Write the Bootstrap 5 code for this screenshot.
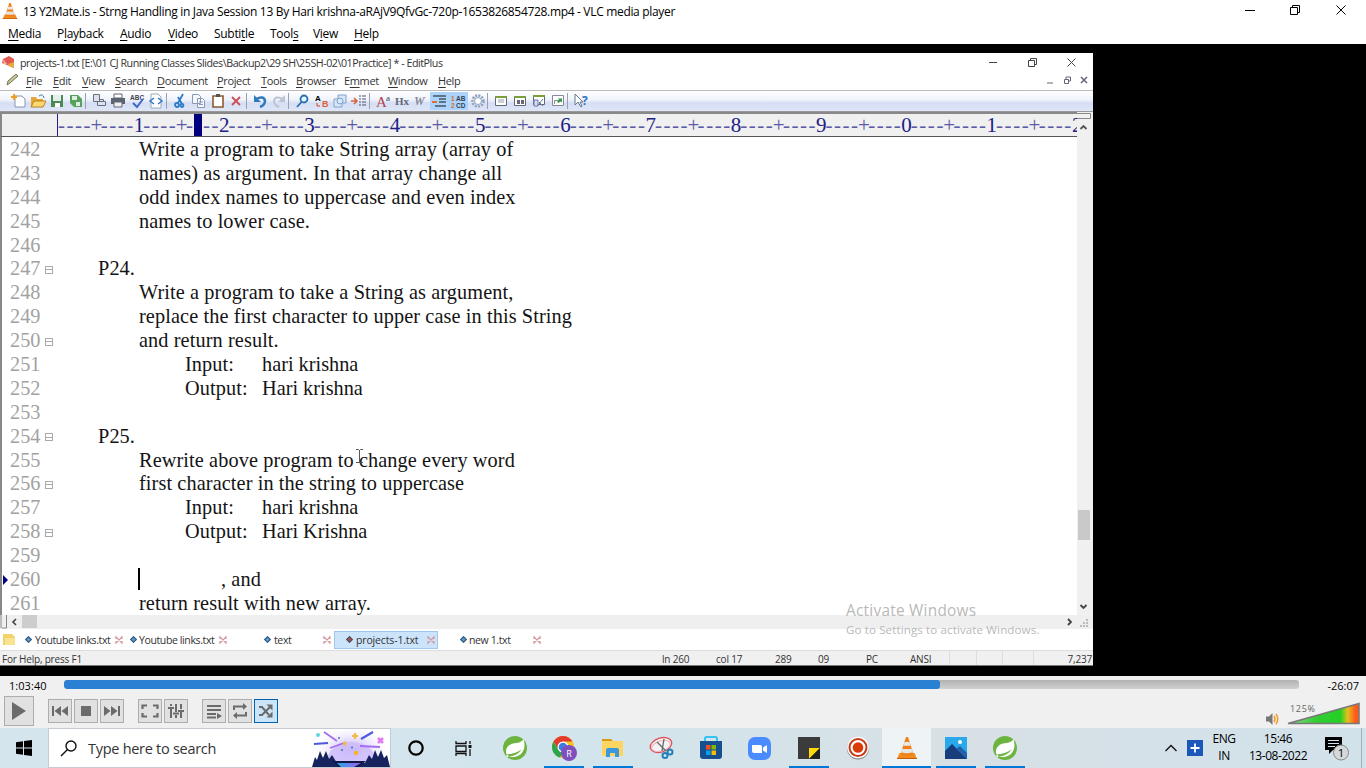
<!DOCTYPE html>
<html lang="en">
<head>
<meta charset="utf-8">
<meta name="viewport" content="width=device-width, initial-scale=1">
<title>VLC media player</title>
<link href="https://cdn.jsdelivr.net/npm/bootstrap@5.3.0/dist/css/bootstrap.min.css" rel="stylesheet">
<style>
body{width:1366px;height:768px;overflow:hidden;background:#000;color:#000;font-family:"Open Sans","Noto Sans",sans-serif;font-size:12px;line-height:1}
svg{display:block;flex:none}
u{text-underline-offset:2px;text-decoration-thickness:1px}
.ui-line{white-space:nowrap;line-height:normal}
.vlc-title{height:22px;padding-left:2px}
.vlc-title .cap{margin-left:5px;letter-spacing:-.32px}
.vlc-menu{height:22px;letter-spacing:-.3px}
.vlc-menu span{width:0;overflow:visible;flex:none}
.stage{height:632px;padding-top:9px}
.editor{width:1093px;height:613px;overflow:hidden;color:#333}
.ep-title{height:19px;font-size:10.7px;letter-spacing:-.46px}
.ep-menu{height:18px;font-size:11px;letter-spacing:-.35px;padding-bottom:2px}
.ep-tools{height:22px;padding-left:9.5px;background:linear-gradient(#fff,#eef2fb 45%,#d5def4 60%,#dfe6f7);border-top:1px solid #bbb;border-bottom:1px solid #999}
.tcell{width:18.93px;height:18px;flex:none;display:flex;align-items:center;justify-content:center}
.tsep{width:4.7px;height:16px;flex:none;border-left:1px solid #9aa0ad}
.hot{background:#abd3fb}
.ruler{height:25px;background:#f0f0f0;border-top:2px solid #888;border-bottom:1px solid #555;border-left:2px solid #888;color:#202088;font:21px/22px "Liberation Serif",serif;width:1077px;overflow:hidden}
.ruler .rstart{width:56px;height:22px;border-right:1px solid #202088;flex:none}
.ruler .dash{width:34.14px;letter-spacing:1.53px;flex:none;white-space:nowrap;color:#5a5aa8}
.ruler .tick{width:8.53px;flex:none;display:flex;justify-content:center}
.ruler .tick.plus{font-size:21px;color:#5a5aa8}
.code-area{height:478px;border-left:2px solid #888;background:#fff}
.code-lines{width:1075px;padding-top:1px;font:20.3px/23.9px "Liberation Serif",serif;color:#141414}
.code-row{height:23.9px;white-space:pre}
.code-row .src{letter-spacing:.1px}
.num{width:31px;margin-left:8px;color:#a2a2a2;flex:none}
.fold{width:8px;height:8px;border:1px solid #aaa;margin:1px 1px 0 4px;flex:none;background:linear-gradient(#aaa,#aaa) center/6px 1px no-repeat}
.vbar{width:16px;background:#f0f0f0}
.vthumb{width:12px;height:30px;background:#c9c9c9;margin:373px auto 0 1px}
.hbar{height:14px;background:#f0eff0}
.ep-tabs{height:22px;background:#fff;font-size:10.5px;letter-spacing:-.38px;border-bottom:1px solid #ddd}
.dia{width:5px;height:5px;background:#5b9ad0;transform:rotate(45deg);flex:none;border:1px solid #357}
.kx{width:8px;height:8px;flex:none}
.ep-status{height:15px;background:#f1f0f0;font-size:10px;letter-spacing:-.2px;border-bottom:1px solid #777}
.st{flex:none;height:14px;line-height:17px;white-space:nowrap}
.ctl{height:52px;background:#f0f0f0}
.seek{height:9px;width:1235px;border-radius:3px;background:linear-gradient(#b2b2b2,#d0d0d0);overflow:hidden;margin-top:-1px}
.seek>div{height:9px;border-radius:3px;background:#2a80d2}
.vbtn{width:24px;height:24px;border:1px solid #adadad;background:#e1e1e1;display:flex;align-items:center;justify-content:center;flex:none;color:#6b6b6b}
.vbtn.big{width:30px;height:30px}
.vbtn.on{background:#cce4f7;border-color:#0063b1}
.task{height:40px;background:linear-gradient(90deg,#d5e5ee,#d3e5ec 45%,#d7e0e5 70%,#d2e2eb)}
.finder{width:343px;height:40px;background:#fff;border:1px solid #c5cbd0;font-size:14.5px;color:#333}
.app{width:49px;height:40px;flex:none;display:flex;align-items:center;justify-content:center}
.run{box-shadow:inset 0 -2px #0078d7}
.run.front{background:#eef3f6}
.run:not(.front){width:40px;margin:0 4.5px}
.tray{font-size:12px;letter-spacing:-.45px;text-align:center;line-height:17px;flex:none;white-space:nowrap}
.wmark{position:absolute;left:846px;top:601px;color:#b9b9b9;font-size:15.4px;letter-spacing:.25px;line-height:20px;white-space:nowrap}
.wmark div+div{font-size:11.6px;letter-spacing:.1px;line-height:18px}
</style>
</head>
<body>
<svg width="0" height="0" class="position-absolute">
 <defs>
  <symbol id="cone" viewBox="0 0 20 22"><path d="M9 0h2l5.500 17h-13z" fill="#f0811a"/><path d="M7.500 5h5l1.200 3.800H6.300zM5.200 12h9.600l1.200 4H4z" fill="#e9e9e6"/><path d="M2.500 16h15L20 22H0z" fill="#f58a1c"/><path d="M4 17c2 2 10 2 12 0l-1-3H5z" fill="#ef7f18"/><path d="M5.200 12h9.600l1 3.300q-6 2-11.600 0z" fill="#e4e4e2"/><path d="M0 21h20v1H0z" fill="#c45b0c"/></symbol>
  <symbol id="leaf" viewBox="0 0 24 24"><circle cx="12" cy="12" r="12" fill="#6db33f"/><path d="M20.500 3c1 4 1.800 8-.2 11.500-2.300 5.500-8 7.500-15.300 6 6-.3 10-2 13.500-7C14.500 16.500 9 18 3.500 18.500c-1.500-4 0-8.500 5-10.500C12.500 6.500 18 7.500 20.500 3z" fill="#fff"/><circle cx="4.300" cy="20" r="1" fill="#fff"/></symbol>
  <symbol id="kx" viewBox="0 0 8 8"><path d="M1 1l6 6M7 1L1 7M1 0v3M7 0v3M1 5v3M7 5v3" stroke="#d39aa2" stroke-width="1.200"/></symbol>
 </defs>
</svg>

<!-- VLC window -->
<header class="bg-white">
 <div class="vlc-title d-flex align-items-center ui-line">
  <svg width="16" height="16"><use href="#cone"/></svg>
  <span class="cap">13 Y2Mate.is - Strng Handling in Java Session 13 By Hari krishna-aRAjV9QfvGc-720p-1653826854728.mp4 - VLC media player</span>
  <svg class="ms-auto" style="margin:-2px 17px 0 0" width="104" height="12" fill="none" stroke="#000"><path d="M0 6.500h10M45.500 3.500h7v7h-7zM47.500 3.500v-2h7v7h-2M91.500 1.500l9 9M100.500 1.500l-9 9"/></svg>
 </div>
 <nav class="vlc-menu d-flex align-items-center ui-line">
  <span style="margin-left:8px"><u>M</u>edia</span><span style="margin-left:49px">P<u>l</u>ayback</span><span style="margin-left:63px"><u>A</u>udio</span><span style="margin-left:48px"><u>V</u>ideo</span><span style="margin-left:46px">Subti<u>t</u>le</span><span style="margin-left:56px">Tool<u>s</u></span><span style="margin-left:43px">V<u>i</u>ew</span><span style="margin-left:41px"><u>H</u>elp</span>
 </nav>
</header>

<main class="stage bg-black">
 <section class="editor bg-white">
  <div class="ep-title d-flex align-items-center ui-line">
   <svg width="13" height="15" style="margin-left:2px"><path d="M1 4l6-3 5 3v9l-7-3-5-2z" fill="#e05a50"/><path d="M6 9l6-2v6l-5-2z" fill="#e8a840"/><path d="M1 4l4 5-3 0z" fill="#f6b0a8"/></svg>
   <span style="margin-left:5px">projects-1.txt [E:\01 CJ Running Classes Slides\Backup2\29 SH\25SH-02\01Practice] * - EditPlus</span>
   <svg class="ms-auto" style="margin:-2px 16px 0 0" width="88" height="12" fill="none" stroke="#444"><path d="M0 6.500h8M39.500 4.500h6v6h-6zM41.500 4.500v-2h6v6h-2M78.500 2.500l8 8M86.500 2.500l-8 8"/></svg>
  </div>
  <nav class="ep-menu vlc-menu d-flex align-items-center ui-line" style="height:18px">
   <svg width="14" height="14" style="margin-left:5px"><path d="M2 12l1-4 8-7 2 2-8 7z" fill="#c6c79a" stroke="#77744f"/></svg>
   <span style="margin-left:7px"><u>F</u>ile</span><span style="margin-left:27px"><u>E</u>dit</span><span style="margin-left:29px"><u>V</u>iew</span><span style="margin-left:33px"><u>S</u>earch</span><span style="margin-left:42px"><u>D</u>ocument</span><span style="margin-left:60px"><u>P</u>roject</span><span style="margin-left:44px"><u>T</u>ools</span><span style="margin-left:35px"><u>B</u>rowser</span><span style="margin-left:48px">E<u>m</u>met</span><span style="margin-left:44px"><u>W</u>indow</span><span style="margin-left:50px"><u>H</u>elp</span>
   <svg class="ms-auto me-1" width="42" height="10" fill="none" stroke="#667"><path d="M0 8h6M17.500 4.500h4v4h-4zM19 4v-2h4.500v4h-2"/><path d="M34 2l6 6M40 2l-6 6" stroke-width="1.500"/></svg>
  </nav>
  <div class="ep-tools d-flex align-items-center">
   <div class="tcell"><svg width="16" height="16"><path d="M4 3h7l3 3v8H4z" fill="#fff" stroke="#8795b5"/><path d="M3 1v6M0 4h6" stroke="#f0a020" stroke-width="2"/></svg></div>
   <div class="tcell"><svg width="16" height="16"><path d="M1 4h5l1 2h6v7H1z" fill="#e5a838"/><path d="M4 8h12l-3 6H1z" fill="#ffd870" stroke="#b78020"/><path d="M9 3q4-3 5 2" stroke="#389" fill="none"/></svg></div>
   <div class="tcell"><svg width="14" height="14"><path d="M1 1h12v12H1z" fill="#4b8a55"/><path d="M3 1h8v6H3z" fill="#e5eee8"/><path d="M5 9h5v4H5z" fill="#fff"/></svg></div>
   <div class="tcell"><svg width="14" height="14"><path d="M1 1h8l4 4v8H5L1 9z" fill="#58a05e"/><path d="M3 2h5v4H3zM7 8h4v4H7z" fill="#dceedd"/></svg></div><i class="tsep"></i>
   <div class="tcell"><svg width="16" height="16" fill="#dde3ee" stroke="#687080"><path d="M2.500 1.500h6v7h-6zM6.500 8.500h8v4h-8zM8.500 6.500h4v2h-4z"/></svg></div>
   <div class="tcell"><svg width="16" height="16"><path d="M4 1h8v4H4z" fill="#fff" stroke="#667"/><path d="M1 5h14v6H1z" fill="#5d6470"/><path d="M4 9h8v5H4z" fill="#eee" stroke="#667"/></svg></div>
   <div class="tcell"><svg width="16" height="16"><text x="1" y="7" font-size="6.500" font-family="Liberation Sans" font-weight="700" fill="#445">ABC</text><path d="M4 10l4 4 6-8" fill="none" stroke="#4166c8" stroke-width="2"/></svg></div>
   <div class="tcell"><svg width="16" height="16"><path d="M3 1h7l3 3v11H3z" fill="#fff" stroke="#9ab"/><path d="M6 5L2 8l4 3M10 5l4 3-4 3" fill="none" stroke="#3778c8" stroke-width="1.500"/></svg></div><i class="tsep"></i>
   <div class="tcell"><svg width="14" height="16" fill="none" stroke="#2e7bc8" stroke-width="1.800"><path d="M10 1L5 10M5 4l4 7"/><circle cx="4" cy="12" r="2"/><circle cx="9" cy="12.500" r="1.500"/></svg></div>
   <div class="tcell"><svg width="15" height="16" fill="#f5f8fd" stroke="#8a9ab5"><path d="M1.500 1.500h6l2 2v7h-8zM6.500 5.500h5l2 2v7h-7zM8 9h4M8 11.500h4"/></svg></div>
   <div class="tcell"><svg width="12" height="14"><path d="M1 2h10v11H1z" fill="#fff" stroke="#8a5b30" stroke-width="1.600"/><path d="M4 0h4v3H4z" fill="#555"/></svg></div>
   <div class="tcell"><svg width="12" height="12"><path d="M2 2l8 8M10 2l-8 8" stroke="#cc4f58" stroke-width="1.800"/></svg></div><i class="tsep"></i>
   <div class="tcell"><svg width="14" height="14"><path d="M3 5q8-4 9 2 0 4-5 6" fill="none" stroke="#2f79bd" stroke-width="2.500"/><path d="M1 1v7h7z" fill="#2f79bd"/></svg></div>
   <div class="tcell"><svg width="14" height="14"><path d="M11 5q-8-4-9 2 0 4 5 6" fill="none" stroke="#bcc4d2" stroke-width="2"/><path d="M13 1v7H6z" fill="#bcc4d2"/></svg></div><i class="tsep"></i>
   <div class="tcell"><svg width="14" height="14" fill="none" stroke="#2d6cb0" stroke-width="1.800"><circle cx="8" cy="5" r="3.500" fill="#dff"/><path d="M5.500 8L1 13"/></svg></div>
   <div class="tcell"><svg width="16" height="16" font-family="Liberation Sans" font-weight="700"><text x="1" y="8" font-size="8">A</text><path d="M3 10v3h3" stroke="#d84020" fill="none"/><text x="8" y="14" font-size="9" fill="#e0603c">B</text></svg></div>
   <div class="tcell"><svg width="14" height="14" fill="#d9e6f6" stroke="#7fa3cf"><path d="M5 1h8v8H5zM1 5h8v8H1z"/><circle cx="7" cy="7" r="3"/></svg></div>
   <div class="tcell"><svg width="16" height="14"><path d="M0 7h5M3 4l3 3-3 3" stroke="#d8603c" stroke-width="1.500" fill="none"/><path d="M8 2h2M8 5h2M8 8h2M8 11h2M11 2h4M11 5h4M11 8h4M11 11h4" stroke="#556"/></svg></div><i class="tsep"></i>
   <div class="tcell"><svg width="16" height="16"><text x="1" y="14" font-family="Liberation Serif" font-size="15" fill="#b5404c">A</text><text x="11" y="8" font-family="Liberation Serif" font-size="9" fill="#345">a</text></svg></div>
   <div class="tcell"><svg width="16" height="16"><text x="1" y="12" font-family="Liberation Serif" font-size="11" font-weight="700" fill="#667">Hx</text></svg></div>
   <div class="tcell"><svg width="14" height="16"><text x="0" y="12" font-family="Liberation Serif" font-size="12" font-style="italic" font-weight="700" fill="#889">W</text></svg></div>
   <div class="tcell hot"><svg width="15" height="14"><path d="M1 2h13M7 5h7M7 8h7M3 12h11" stroke="#456" stroke-width="1.500"/><path d="M0 8h5" stroke="#e07030" stroke-width="2"/></svg></div>
   <div class="tcell hot"><svg width="17" height="17" font-family="Liberation Sans" font-size="6.500" font-weight="700"><text x="1" y="7.500" fill="#d0702f">1</text><text x="6" y="7.500" fill="#345">AB</text><text x="1" y="15" fill="#d0702f">2</text><text x="6" y="15" fill="#345">CD</text></svg></div>
   <div class="tcell"><svg width="16" height="16"><circle cx="8" cy="8" r="5.500" fill="#e4ebf5" stroke="#8ea3bd" stroke-width="2.500" stroke-dasharray="2 1.200"/><circle cx="8" cy="8" r="3.500" fill="#fff" stroke="#8ea3bd"/></svg></div><i class="tsep"></i>
   <div class="tcell"><svg width="14" height="14"><path d="M1.500 2.500h11v9h-11z" fill="#fff" stroke="#667"/><path d="M1 2h12v2H1z" fill="#7b9e3c"/><path d="M4 6h6M4 8h6" stroke="#99a"/></svg></div>
   <div class="tcell"><svg width="14" height="14"><path d="M1.500 2.500h11v9h-11z" fill="#fff" stroke="#667"/><path d="M1 2h12v2H1z" fill="#7b9e3c"/><path d="M4 6h3v4H4zM8 6h3v4H8z" fill="#667"/></svg></div>
   <div class="tcell"><svg width="14" height="14"><path d="M1.500 1.500h11v9h-11z" fill="#fff" stroke="#667"/><path d="M1 1h12v2H1z" fill="#7b9e3c"/><path d="M2 6h4v6H2zM7 8l4 4M11 5l-4 5" fill="#dde" stroke="#67a"/></svg></div>
   <div class="tcell"><svg width="14" height="14"><path d="M1.500 1.500h11v10h-11z" fill="#fff" stroke="#889"/><path d="M3.500 10V6.500H8" fill="none" stroke="#889"/><path d="M6 8l2-2-1-1.500h4v4L9.500 7.500 7.500 9z" fill="#3a9a48"/></svg></div><i class="tsep"></i>
   <div class="tcell"><svg width="16" height="16"><path d="M1 1v11l3-3 3 5 1-1-2-4h3z" fill="#fff" stroke="#678"/><text x="8" y="12" font-size="12" font-weight="700" fill="#2f72c0">?</text></svg></div>
  </div>
  <div class="d-flex">
   <div class="ruler d-flex position-relative" id="ruler"><div class="rstart"></div></div>
   <div class="flex-fill" style="background:#f0f0f0"><svg width="16" height="25" fill="none" stroke="#555"><path d="M0 6.500h13.500v-5H0" stroke="#888"/><path d="M3.500 17L6.500 14l3 3" stroke-width="1.800"/></svg></div>
  </div>
  <div class="code-area d-flex">
   <div class="code-lines" id="code"></div>
   <div class="vbar"><div class="vthumb"></div><svg width="16" height="10" style="margin-top:62px" fill="none" stroke="#444" stroke-width="1.800"><path d="M3.500 3L6.500 6l3-3"/></svg></div>
  </div>
  <div class="hbar d-flex align-items-center">
   <svg width="40" height="14"><path d="M1 0v13M6.500 0v13H2" stroke="#888" fill="none"/><path d="M16 4l-3 3 3 3" fill="none" stroke="#444" stroke-width="1.600"/><path d="M22 0h15v13H22z" fill="#cdcdcd"/></svg>
   <svg class="ms-auto" width="28" height="14"><path d="M3 4l3 3-3 3" fill="none" stroke="#444" stroke-width="1.800"/><path d="M21 4h2v2h-2zM21 7h2v2h-2zM18 7h2v2h-2zM21 10h2v2h-2zM18 10h2v2h-2zM15 10h2v2h-2z" fill="#bbb"/></svg>
  </div>
  <div class="ep-tabs d-flex align-items-center ui-line">
   <svg width="13" height="13" style="margin-left:3px"><path d="M0 1h9l3 3v8H0z" fill="#f1d36a"/><path d="M2 5h10v7H2z" fill="#f8e390"/></svg>
   <div class="d-flex align-items-center" style="width:105px;padding-left:10px"><i class="dia"></i><span style="margin-left:4px">Youtube links.txt</span><svg class="kx ms-auto" style="margin-right:-2px"><use href="#kx"/></svg></div>
   <div class="d-flex align-items-center" style="width:105px;padding-left:10px"><i class="dia"></i><span style="margin-left:3px">Youtube links.txt</span><svg class="kx ms-auto" style="margin-right:-1px"><use href="#kx"/></svg></div>
   <div class="d-flex align-items-center" style="width:108px;padding-left:39px"><i class="dia"></i><span class="ms-1">text</span><svg class="kx ms-auto" style="margin-right:3px"><use href="#kx"/></svg></div>
   <div class="d-flex align-items-center" style="width:104px;height:18px;background:#cce4fa;border:1px solid #9fc8ee;padding-left:12px"><i class="dia" style="background:#c04a30"></i><span class="ms-1" style="letter-spacing:-.15px">projects-1.txt</span><svg class="kx ms-auto" style="margin-right:2px"><use href="#kx"/></svg></div>
   <div class="d-flex align-items-center" style="width:103px;padding-left:23px"><i class="dia"></i><span style="margin-left:3px">new 1.txt</span><svg class="kx ms-auto"><use href="#kx"/></svg></div>
  </div>
  <div class="ep-status d-flex">
   <span class="st" style="width:662px;padding-left:2px">For Help, press F1</span><span class="st" style="width:54px">ln 260</span><span class="st" style="width:59px">col 17</span><span class="st" style="width:43px">289</span><span class="st" style="width:48px">09</span><span class="st" style="width:44px">PC</span><span class="st" style="width:40px;border-right:1px solid #ddd">ANSI</span><span class="st" style="width:27px;border-right:1px solid #ddd"></span><span class="st" style="width:26px;border-right:1px solid #ddd"></span><span class="st" style="width:31px;border-right:1px solid #ddd"></span><span class="st ms-auto me-0" style="padding-right:1px">7,237</span>
  </div>
 </section>
 <div class="wmark"><div>Activate Windows</div><div>Go to Settings to activate Windows.</div></div>
</main>

<!-- Player controls -->
<section class="ctl">
 <div class="d-flex align-items-center ui-line" style="height:18px;font-size:11px">
  <span style="width:64px;padding-left:9px;letter-spacing:.05px" class="flex-shrink-0">1:03:40</span>
  <div class="seek"><div style="width:876px"></div></div>
  <span class="ms-auto" style="padding-right:7px">-26:07</span>
 </div>
 <div class="d-flex align-items-center" style="height:34px;padding-left:4px">
  <div class="vbtn big"><svg width="14" height="18"><path d="M0 0l14 9-14 9z" fill="currentColor"/></svg></div>
  <div class="vbtn" style="margin-left:14px"><svg width="16" height="12" fill="currentColor"><path d="M0 1h2v10H0zM9 1v10L2.500 6zM16 1v10L9.500 6z"/></svg></div>
  <div class="vbtn" style="margin-left:2px"><svg width="10" height="10"><path d="M0 0h10v10H0z" fill="currentColor"/></svg></div>
  <div class="vbtn" style="margin-left:2px"><svg width="16" height="12" fill="currentColor"><path d="M14 1h2v10h-2zM0 1v10l6.500-5zM7 1v10l6.500-5z"/></svg></div>
  <div class="vbtn" style="margin-left:14px"><svg width="18" height="14" fill="none" stroke="currentColor" stroke-width="2.200"><path d="M1.500 5V1.500H6M12 1.500h4.500V5M16.500 9v3.500H12M6 12.500H1.500V9"/></svg></div>
  <div class="vbtn" style="margin-left:2px"><svg width="16" height="14" fill="none" stroke="currentColor" stroke-width="2"><path d="M3 0v2M3 4v10M8 0v8M8 11v3M13 0v5M13 8v6M0 4h6M5 9.500h6M10 7h6"/></svg></div>
  <div class="vbtn" style="margin-left:14px"><svg width="15" height="15"><path d="M0 2h14M0 6h14M0 10h9M0 13.500h9" stroke="currentColor" stroke-width="1.800"/><path d="M10 9l5 3-5 3z" fill="currentColor"/></svg></div>
  <div class="vbtn" style="margin-left:2px"><svg width="16" height="16"><path d="M2 7V3.500H12M14 9v3.500H4" fill="none" stroke="currentColor" stroke-width="2"/><path d="M11 0l4 3.500L11 7zM5 9l-4 3.500L5 16z" fill="currentColor"/></svg></div>
  <div class="vbtn on" style="margin-left:2px"><svg width="16" height="16"><path d="M1 4h3l7 8M1 12h3l8-8" fill="none" stroke="currentColor" stroke-width="2"/><path d="M8.500 1.500h6v6zM8.500 14.500h6v-6z" fill="currentColor"/></svg></div>
  <svg class="ms-auto" style="margin-right:6px" width="96" height="34" viewBox="0 0 96 34">
   <defs><linearGradient id="vg"><stop offset="0" stop-color="#8bd98b"/><stop offset=".4" stop-color="#32cd32"/><stop offset=".74" stop-color="#25d025"/><stop offset=".84" stop-color="#e5c01c"/><stop offset=".95" stop-color="#ff5a1c"/></linearGradient></defs>
   <path d="M2 22.500h3l3.500-3.500v12L5 27.500H2z" fill="#777"/><path d="M10 22q2 3 0 6M12 20q3.500 5 0 10" fill="none" stroke="#f29a2e" stroke-width="1.500"/>
   <path d="M24 29.500L95 9.500V29.500z" fill="url(#vg)" stroke="#777" stroke-width="1.500"/>
   <text x="26" y="18" font-size="9" fill="#666" textLength="25">125%</text>
  </svg>
 </div>
</section>

<!-- Windows taskbar -->
<footer class="task d-flex align-items-center">
 <div class="app" style="width:48px"><svg width="16" height="16" fill="#000"><path d="M0 2.300L7 1.300V7.500H0zM8 1.100L16 0v7.500H8zM0 8.500h7v6.200L0 13.700zM8 8.500h8V16L8 14.900z"/></svg></div>
 <div class="finder d-flex align-items-center ui-line">
  <svg width="17" height="17" style="margin-left:11px" fill="none" stroke="#111" stroke-width="1.400"><circle cx="11" cy="6" r="5"/><path d="M7.500 9.500L1 16"/></svg>
  <span style="margin-left:11px;letter-spacing:-.28px">Type here to search</span>
  <svg class="ms-auto" width="78" height="38" viewBox="0 0 78 38">
   <defs><radialGradient id="glow"><stop offset="0" stop-color="#bfa6f7"/><stop offset="1" stop-color="#e7e5fd" stop-opacity="0"/></radialGradient><linearGradient id="lake"><stop offset="0" stop-color="#22a9e8"/><stop offset="1" stop-color="#a55af0"/></linearGradient></defs>
   <ellipse cx="39" cy="20" rx="36" ry="22" fill="url(#glow)"/><path d="M14 32q4-18 25-19 22 1 26 19v6H14z" fill="#cdbafb" opacity=".8"/>
   <path d="M12 3l13 9M68 18l-20-1M18 19l14-5" stroke="#a46df2" stroke-width="1.800"/><path d="M2 15l14-1M49 10L61 3" stroke="#5058e0" stroke-width="2.200"/>
   <path d="M43 4v6M40 7h6M33 12.500v4M31 14.500h4" stroke="#f0bd42" stroke-width="2.200"/><circle cx="44" cy="24" r="2.200" fill="#f6b425"/><circle cx="6" cy="6" r="2" fill="#62d4dc"/><path d="M66 9l5 5M71 9l-5 5" stroke="#e07af0" stroke-width="2.500"/><circle cx="27" cy="9" r="1" fill="#37b"/><circle cx="40" cy="18.500" r="1" fill="#37b"/><circle cx="30" cy="21" r="1" fill="#37b"/>
   <path d="M0 38l3-10 2 3 3-9 3 7 3-7 3 8 3-4 5 8h28l4-8 3 4 3-9 3 7 3-7 3 8 3-3 3 12z" fill="#16235f"/><path d="M20 32h34l-7 6H27z" fill="#10184a"/><path d="M25 34h24l-7 4H29z" fill="url(#lake)"/>
  </svg>
 </div>
 <div class="app" style="width:50px"><svg width="18" height="18"><circle cx="9" cy="9" r="6.700" fill="none" stroke="#000" stroke-width="2.200"/></svg></div>
 <div class="app" style="width:49px;padding-right:4px"><svg width="17" height="17" fill="none" stroke="#111" stroke-width="1.300"><path d="M1 1v2.500h10V1M1 6h10v5.500H1zM1 16v-2.500h10V16M15 1v3M15 9v7"/><path d="M13.500 5h3v3h-3z" fill="#111" stroke="none"/></svg></div>
 <div class="app"><svg width="24" height="24"><use href="#leaf"/></svg></div>
 <div class="app run"><svg width="26" height="27" viewBox="0 0 26 27"><circle cx="12" cy="12" r="11" fill="#f5c518"/><path d="M2.500 6.500A11 11 0 0 1 21.500 6.500H12L7 14z" fill="#e33b2e"/><path d="M2.500 6.500L7.500 15 12 17.500 9 22.600A11 11 0 0 1 2.500 6.500z" fill="#2da44e"/><circle cx="12" cy="12" r="5.500" fill="#fff"/><circle cx="12" cy="12" r="4.300" fill="#3b7de0"/><circle cx="18" cy="18" r="8" fill="#7f50bd"/><text x="18" y="21.500" font-size="9" text-anchor="middle" fill="#fff">R</text></svg></div>
 <div class="app run"><svg width="22" height="20"><path d="M0 1h9l2 2H0z" fill="#d69a12"/><path d="M0 3h21v15H0z" fill="#ffd561"/><path d="M4 19v-7q0-2 2-2h9q2 0 2 2v7h-4v-4H8v4z" fill="#3c97dc"/></svg></div>
 <div class="app"><svg width="26" height="24"><ellipse cx="12" cy="9" rx="11" ry="7" transform="rotate(-18 12 9)" fill="#f3f3f6" stroke="#e0525a" stroke-width="1.300"/><ellipse cx="12" cy="10" rx="9.500" ry="5" transform="rotate(-18 12 10)" fill="none" stroke="#eeb5b8"/><path d="M8 6l9 9M15 3l-2 12" stroke="#666" stroke-width="1.300"/><circle cx="21" cy="16" r="2.500" fill="none" stroke="#2180b8" stroke-width="2"/><circle cx="16" cy="19.500" r="2.500" fill="none" stroke="#2180b8" stroke-width="2"/></svg></div>
 <div class="app"><svg width="24" height="24"><path d="M6 6V2.500Q6 1 7.500 1h9Q18 1 18 2.500V6" fill="none" stroke="#35c3f1" stroke-width="2"/><path d="M1 5h22v15q0 3-3 3H4q-3 0-3-3z" fill="#17508e"/><path d="M7 9h4.500v4.500H7z" fill="#f25022"/><path d="M12.500 9H17v4.500h-4.500z" fill="#7fba00"/><path d="M7 14.500h4.500V19H7z" fill="#00a4ef"/><path d="M12.500 14.500H17V19h-4.500z" fill="#ffb900"/></svg></div>
 <div class="app"><svg width="23" height="23"><rect width="23" height="23" rx="7" fill="#4a8cff"/><path d="M4 8h8q2 0 2 2v6H6q-2 0-2-2zM15 10.500L19 8v8l-4-2.500z" fill="#fff"/></svg></div>
 <div class="app run"><svg width="22" height="22"><path d="M0 0h22v22H0z" fill="#3b3b3b"/><path d="M11 11h11L11 22z" fill="#ffd90a"/><path d="M11 22L22 11v11z" fill="#222"/></svg></div>
 <div class="app"><svg width="24" height="24"><circle cx="12" cy="12.500" r="11" fill="#888"/><circle cx="12" cy="11.500" r="10.800" fill="#fff"/><circle cx="12" cy="11.500" r="8.500" fill="none" stroke="#c83a18" stroke-width="2"/><circle cx="12" cy="11.500" r="5.300" fill="#d83a08"/></svg></div>
 <div class="app run front"><svg width="20" height="22"><use href="#cone"/></svg></div>
 <div class="app run"><svg width="22" height="22"><path d="M0 0h22v22H0z" fill="#29a9ea"/><circle cx="15" cy="5" r="2" fill="#fff"/><path d="M0 14l7-7 15 15H0z" fill="#173d7a"/><path d="M11 12l4-3 7 7v6z" fill="#2560ad"/></svg></div>
 <div class="app run"><svg width="24" height="24"><use href="#leaf"/></svg></div>
 <svg width="14" height="10" class="ms-auto"><path d="M1.500 8L7 2.500 12.500 8" fill="none" stroke="#111" stroke-width="1.300"/></svg>
 <svg width="16" height="16" style="margin-left:9px"><path d="M0 0h16v16H0z" fill="#1b57b8"/><path d="M8 3.500v9M3.500 8h9" stroke="#fff" stroke-width="1.800"/></svg>
 <div class="tray" style="width:42px;margin-top:-2px">ENG<br>IN</div>
 <div class="tray" style="width:66px;margin-top:-2px">15:46<br>13-08-2022</div>
 <svg width="26" height="26" style="margin:2px 11px 0 13px"><path d="M1 1h17v13H9l-4 4v-4H1z" fill="#000"/><path d="M4 4.500h11M4 7.500h11M4 10.500h7" stroke="#d3e3eb"/><circle cx="17" cy="16.500" r="7.500" fill="#d4d8da" stroke="#888"/><text x="17" y="20.500" font-size="11.500" text-anchor="middle">1</text></svg>
 <div style="width:5px;height:40px;border-left:1px solid #9eb0ba"></div>
</footer>

<script src="https://cdn.jsdelivr.net/npm/bootstrap@5.3.0/dist/js/bootstrap.bundle.min.js"></script>
<script>
// Column ruler: one unit per ten columns
document.getElementById('ruler').insertAdjacentHTML('beforeend', '123456789012'.split('').map(n =>
  `<span class="dash">----</span><span class="tick plus">+</span><span class="dash">----</span><span class="tick">${n}</span>`).join('') +
  '<div class="position-absolute" style="left:192px;top:0;width:8px;height:22px;background:#000080"></div>');

// Code rows: [x of text, text, folded, second column text]
const rows = [
 [139,'Write a program to take String array (array of'],[139,'names) as argument. In that array change all'],
 [139,'odd index names to uppercase and even index'],[139,'names to lower case.'],[],
 [98,'P24.',1],[139,'Write a program to take a String as argument,'],
 [139,'replace the first character to upper case in this String'],[139,'and return result.',1],
 [185,'Input:',0,'hari krishna'],[185,'Output:',0,'Hari krishna'],[],
 [98,'P25.',1],[139,'Rewrite above program to change every word'],[139,'first character in the string to uppercase',1],
 [185,'Input:',0,'hari krishna'],[185,'Output:',1,'Hari Krishna'],[],
 [221,', and'],[139,'return result with new array.']];
document.getElementById('code').innerHTML = rows.map((r, i) => {
  const fold = r[2] ? '<i class="fold"></i>' : '<i style="width:13px;flex:none"></i>';
  const x = (r[0] || 139) - 54;
  const second = r[3] ? `<span>${r[3]}</span>` : '';
  return `<div class="code-row d-flex align-items-center position-relative"><span class="num">${242 + i}</span>${fold}` +
    `<span class="src" style="margin-left:${x}px;${r[3] ? 'width:77px' : ''}">${r[1] || ''}</span>${second}` +
    (i === 18 ? '<svg class="position-absolute" style="left:1px;top:6px" width="5" height="12"><path d="M0 1l5 5-5 5z" fill="#000080"/></svg><i class="position-absolute bg-black" style="left:136px;top:0;width:1.5px;height:22px"></i>' : '') +
    (i === 13 ? '<svg class="position-absolute" style="left:353px;top:-1px" width="9" height="16" fill="none" stroke="#555"><path d="M1 1.500h2.500l1 1 1-1H8M4.500 2v12M1 14.500h7"/></svg>' : '') + '</div>';
}).join('');
</script>
</body>
</html>
